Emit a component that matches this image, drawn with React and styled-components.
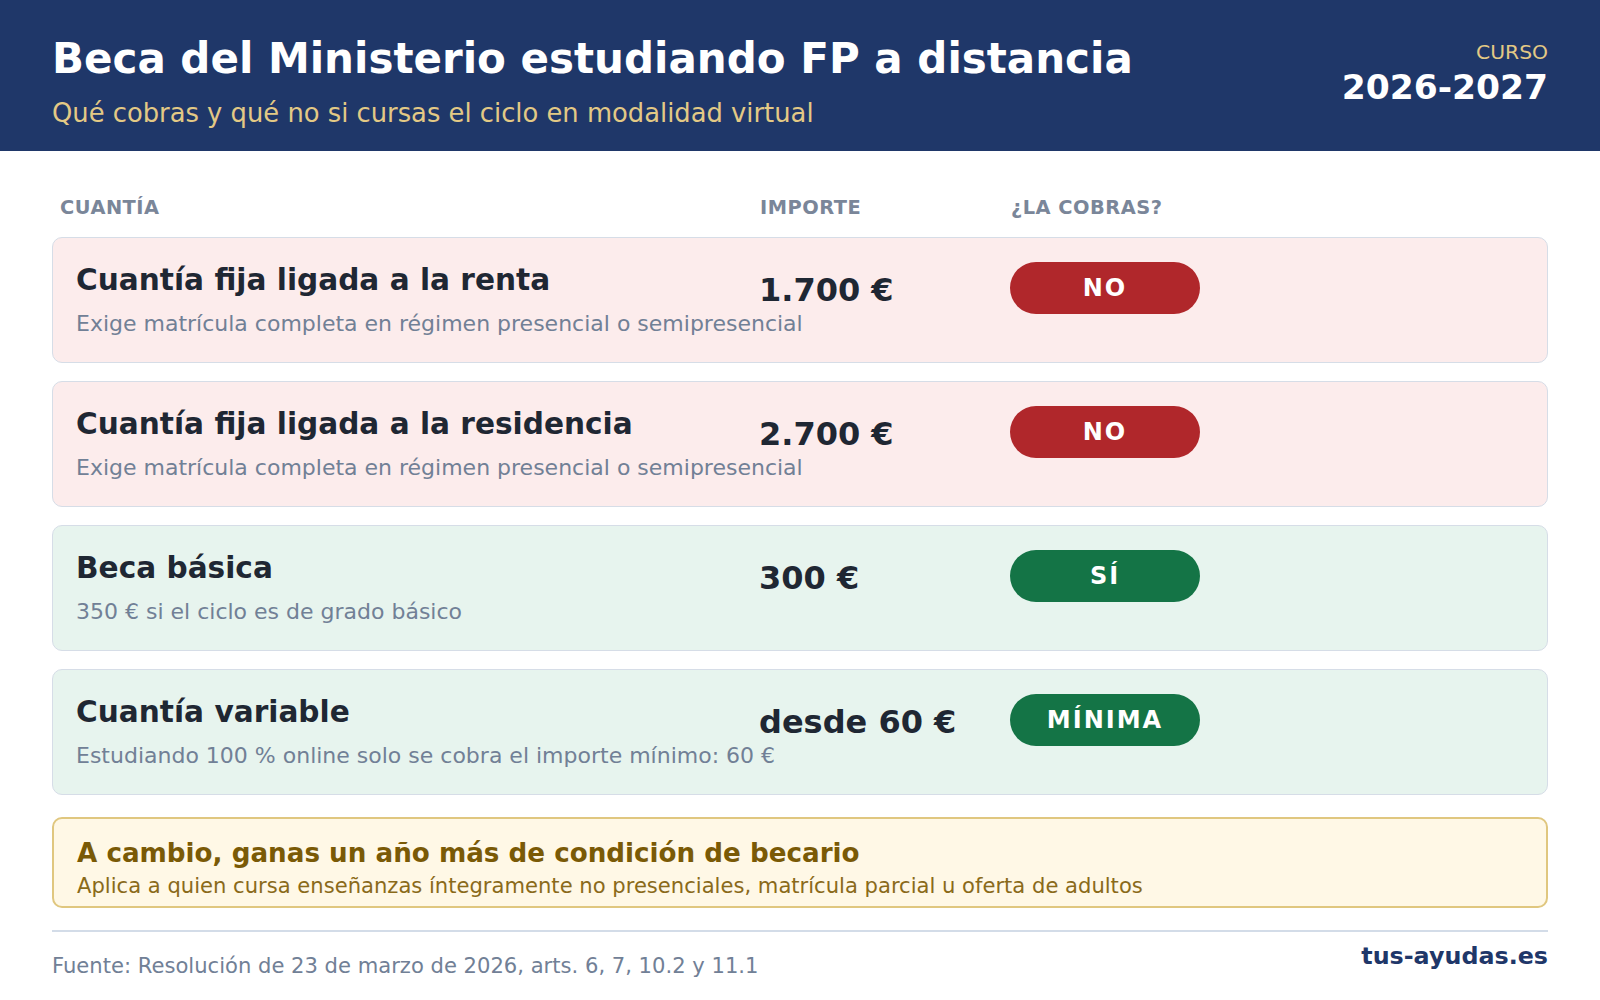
import React from "react";
import styled, { createGlobalStyle } from "styled-components";

const Global = createGlobalStyle`
  html, body { margin: 0; padding: 0; background: #ffffff; }
  body { font-family: "DejaVu Sans", "Liberation Sans", sans-serif; }
  * { box-sizing: border-box; }
`;

const Page = styled.div`
  width: 1600px;
  height: 1000px;
  background: #ffffff;
  display: flex;
  flex-direction: column;
`;

const Header = styled.header`
  height: 151px;
  background: #1f3769;
  padding: 0 52px;
  display: flex;
  justify-content: space-between;
  align-items: flex-start;
`;

const HeaderLeft = styled.div`
  display: flex;
  flex-direction: column;
  padding-top: 35px;
`;

const Title = styled.h1`
  margin: 0;
  font-size: 42px;
  line-height: 48px;
  font-weight: 700;
  color: #ffffff;
`;

const Subtitle = styled.p`
  margin: 15px 0 0;
  font-size: 25.8px;
  line-height: 30px;
  color: #e3c985;
`;

const HeaderRight = styled.div`
  display: flex;
  flex-direction: column;
  align-items: flex-end;
  padding-top: 40px;
`;

const CursoLabel = styled.span`
  font-size: 20.3px;
  line-height: 24px;
  color: #e3c985;
`;

const CursoYear = styled.span`
  margin-top: 3px;
  font-size: 34.5px;
  line-height: 40px;
  font-weight: 700;
  color: #ffffff;
`;

const Main = styled.main`
  padding: 0 52px;
  display: flex;
  flex-direction: column;
`;

const ColHeads = styled.div`
  display: grid;
  grid-template-columns: 700px 251px 1fr;
  padding: 45px 0 0 8px;
  height: 86px;
`;

const ColHead = styled.span`
  font-size: 19.4px;
  line-height: 24px;
  font-weight: 700;
  color: #7a8699;
  letter-spacing: 0.5px;
`;

const Cards = styled.div`
  display: flex;
  flex-direction: column;
  gap: 18px;
`;

const Card = styled.div`
  display: grid;
  grid-template-columns: 683px 251px 190px 1fr;
  grid-template-rows: 52px auto;
  padding: 24px 23px 24px 23px;
  height: 126px;
  border: 1px solid #d6dde7;
  border-radius: 10px;
  background: ${(p) => (p.$tone === "no" ? "#fcecec" : "#e7f4ee")};
`;

const CardTitle = styled.div`
  align-self: start;
  font-size: 29.6px;
  line-height: 36px;
  font-weight: 700;
  color: #1f2733;
  white-space: nowrap;
`;

const Amount = styled.div`
  align-self: center;
  padding-top: 4px;
  font-size: 32px;
  line-height: 38px;
  font-weight: 700;
  color: #1f2733;
  white-space: nowrap;
`;

const Badge = styled.div`
  height: 52px;
  border-radius: 26px;
  background: ${(p) => (p.$tone === "no" ? "#b0272b" : "#147446")};
  color: #ffffff;
  font-size: 24px;
  font-weight: 700;
  letter-spacing: 2px;
  display: flex;
  align-items: center;
  justify-content: center;
`;

const CardSub = styled.div`
  grid-column: 1 / -1;
  margin-top: -3px;
  font-size: 22px;
  line-height: 26px;
  color: #718096;
  white-space: nowrap;
`;

const Note = styled.div`
  margin-top: 22px;
  height: 91px;
  padding: 18px 23px 0;
  border: 2px solid #e0c77f;
  border-radius: 10px;
  background: #fff8e6;
  display: flex;
  flex-direction: column;
`;

const NoteTitle = styled.div`
  font-size: 26.2px;
  line-height: 32px;
  font-weight: 700;
  color: #7a5a06;
`;

const NoteText = styled.div`
  margin-top: 4px;
  font-size: 21.1px;
  line-height: 26px;
  color: #8a6a1a;
`;

const Divider = styled.hr`
  margin: 22px 0 0;
  border: 0;
  height: 2px;
  background: #d3dce8;
`;

const Footer = styled.div`
  display: flex;
  justify-content: space-between;
  align-items: flex-start;
  padding-top: 10px;
`;

const Source = styled.span`
  margin-top: 11px;
  font-size: 21.1px;
  line-height: 26px;
  color: #718096;
`;

const Brand = styled.span`
  font-size: 23.8px;
  line-height: 28px;
  font-weight: 700;
  color: #1f3769;
`;

const rows = [
  {
    title: "Cuantía fija ligada a la renta",
    amount: "1.700 €",
    badge: "NO",
    tone: "no",
    sub: "Exige matrícula completa en régimen presencial o semipresencial",
  },
  {
    title: "Cuantía fija ligada a la residencia",
    amount: "2.700 €",
    badge: "NO",
    tone: "no",
    sub: "Exige matrícula completa en régimen presencial o semipresencial",
  },
  {
    title: "Beca básica",
    amount: "300 €",
    badge: "SÍ",
    tone: "yes",
    sub: "350 € si el ciclo es de grado básico",
  },
  {
    title: "Cuantía variable",
    amount: "desde 60 €",
    badge: "MÍNIMA",
    tone: "yes",
    sub: "Estudiando 100 % online solo se cobra el importe mínimo: 60 €",
  },
];

export default function App() {
  return (
    <Page>
      <Global />
      <Header>
        <HeaderLeft>
          <Title>Beca del Ministerio estudiando FP a distancia</Title>
          <Subtitle>Qué cobras y qué no si cursas el ciclo en modalidad virtual</Subtitle>
        </HeaderLeft>
        <HeaderRight>
          <CursoLabel>CURSO</CursoLabel>
          <CursoYear>2026-2027</CursoYear>
        </HeaderRight>
      </Header>
      <Main>
        <ColHeads>
          <ColHead>CUANTÍA</ColHead>
          <ColHead>IMPORTE</ColHead>
          <ColHead>¿LA COBRAS?</ColHead>
        </ColHeads>
        <Cards>
          {rows.map((r) => (
            <Card key={r.title} $tone={r.tone}>
              <CardTitle>{r.title}</CardTitle>
              <Amount>{r.amount}</Amount>
              <Badge $tone={r.tone}>{r.badge}</Badge>
              <span />
              <CardSub>{r.sub}</CardSub>
            </Card>
          ))}
        </Cards>
        <Note>
          <NoteTitle>A cambio, ganas un año más de condición de becario</NoteTitle>
          <NoteText>
            Aplica a quien cursa enseñanzas íntegramente no presenciales, matrícula parcial u oferta de adultos
          </NoteText>
        </Note>
        <Divider />
        <Footer>
          <Source>Fuente: Resolución de 23 de marzo de 2026, arts. 6, 7, 10.2 y 11.1</Source>
          <Brand>tus-ayudas.es</Brand>
        </Footer>
      </Main>
    </Page>
  );
}
